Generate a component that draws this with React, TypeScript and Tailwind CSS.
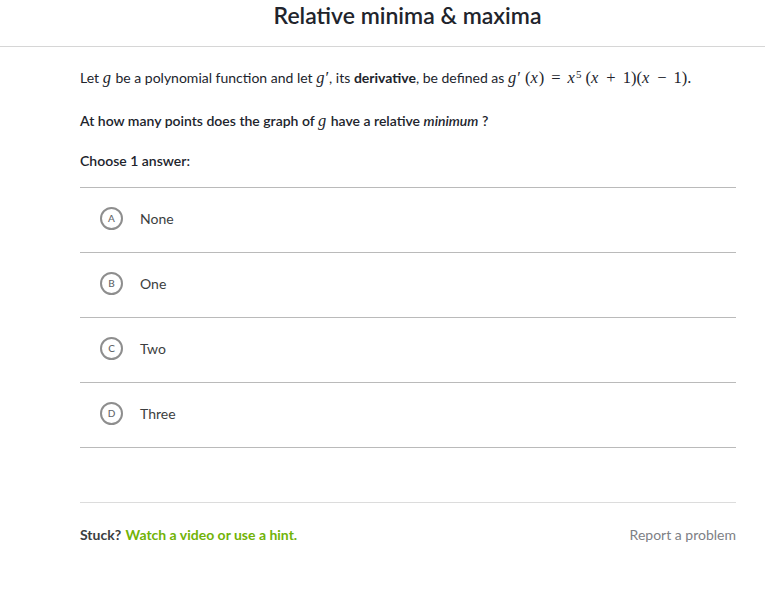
const choices = [
  { letter: "A", label: "None" },
  { letter: "B", label: "One" },
  { letter: "C", label: "Two" },
  { letter: "D", label: "Three" },
];

function M({ children }: { children: React.ReactNode }) {
  return (
    <span className="font-['Liberation_Serif',serif] text-[16.5px] font-normal">
      {children}
    </span>
  );
}

function I({ children }: { children: React.ReactNode }) {
  return <span className="pr-[1px] italic">{children}</span>;
}

function Op({ children }: { children: React.ReactNode }) {
  return <span className="mx-[7px]">{children}</span>;
}

export default function App() {
  return (
    <div className="min-h-[599px] w-[765px] bg-white font-['Lato',sans-serif] text-[#21242c]">
      <header className="flex h-[47px] items-start justify-center border-b border-[#d6d6d6] pl-[50px]">
        <h1 className="text-[23px] font-semibold leading-[30px]">
          Relative minima &amp; maxima
        </h1>
      </header>

      <main className="pl-[80px] pr-[29px]">
        <p className="mt-[19px] whitespace-nowrap text-[14px] leading-[24px]">
          Let <M><I>g</I></M> be a polynomial function and let{" "}
          <M><I>g</I>′</M>, its <span className="font-bold">derivative</span>,
          be defined as{" "}
          <M>
            <I>g</I>′ (<I>x</I>)<Op>=</Op><I>x</I>
            <sup className="text-[11px]">5</sup> (<I>x</I><Op>+</Op>1)(<I>x</I>
            <Op>−</Op>1).
          </M>
        </p>

        <p className="mt-[19px] text-[14px] font-semibold leading-[24px]">
          At how many points does the graph of{" "}
          <M><I>g</I></M> have a relative{" "}
          <span className="italic">minimum</span> ?
        </p>

        <p className="mt-[16px] text-[14px] font-semibold leading-[24px]">
          Choose 1 answer:
        </p>

        <ul className="mt-[14px] border-t border-[#bababa]">
          {choices.map((c) => (
            <li
              key={c.letter}
              className="flex h-[65px] items-center gap-[17px] border-b border-[#bababa] pb-[4px] pl-[20px]"
            >
              <span className="flex h-[23px] w-[23px] items-center justify-center rounded-full border-2 border-[#8e8e8e] text-[10px] font-medium text-[#626569]">
                {c.letter}
              </span>
              <span className="text-[14px] text-[#3b3e40]">{c.label}</span>
            </li>
          ))}
        </ul>

        <div className="mt-[54px] flex items-center justify-between border-t border-[#dcdcdc] pt-[21px] text-[14px]">
          <p className="font-bold text-[#3b3e40]">
            Stuck? <span className="pl-[1px] text-[#71b307]">Watch a video or use a hint.</span>
          </p>
          <span className="text-[#7d8085]">Report a problem</span>
        </div>
      </main>
    </div>
  );
}
